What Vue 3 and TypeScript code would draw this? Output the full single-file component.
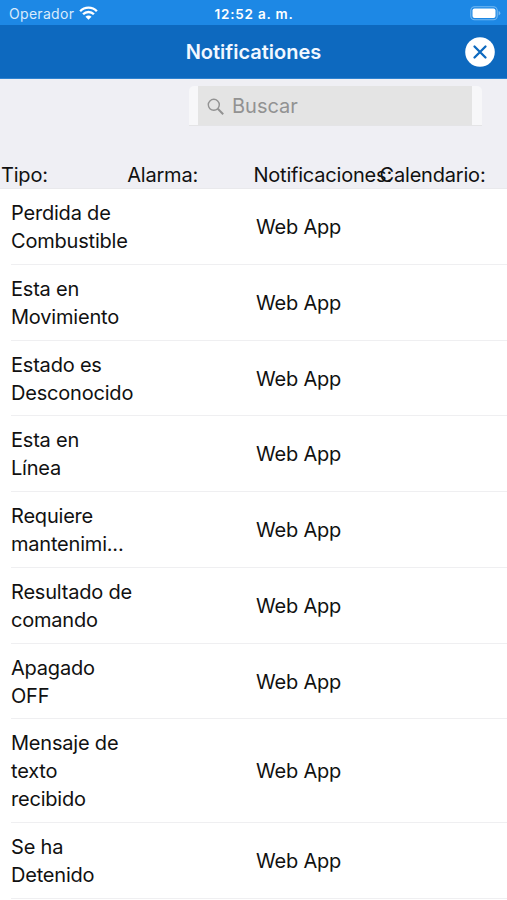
<script setup lang="ts">
interface NotificationRow {
  lines: string[]
  channel: string
}

const headers: string[] = ['Tipo:', 'Alarma:', 'Notificaciones:', 'Calendario:']

const rows: NotificationRow[] = [
  { lines: ['Perdida de', 'Combustible'], channel: 'Web App' },
  { lines: ['Esta en', 'Movimiento'], channel: 'Web App' },
  { lines: ['Estado es', 'Desconocido'], channel: 'Web App' },
  { lines: ['Esta en', 'Línea'], channel: 'Web App' },
  { lines: ['Requiere', 'mantenimi...'], channel: 'Web App' },
  { lines: ['Resultado de', 'comando'], channel: 'Web App' },
  { lines: ['Apagado', 'OFF'], channel: 'Web App' },
  { lines: ['Mensaje de', 'texto', 'recibido'], channel: 'Web App' },
  { lines: ['Se ha', 'Detenido'], channel: 'Web App' },
]
</script>

<template>
  <div class="screen">
    <div class="status">
      <div class="carrier">
        <span>Operador</span>
        <svg class="wifi" width="19" height="15" viewBox="0 0 20 15" fill="none" stroke="#fff" stroke-width="2.5">
          <path d="M1.2 5.1C6 .1 14 .1 18.8 5.1" />
          <path d="M4.3 8.3C7.4 5.1 12.6 5.1 15.7 8.3" />
          <path d="M6.8 10.9C8.6 9.1 11.4 9.1 13.2 10.9L10 14Z" fill="#fff" stroke="none" />
        </svg>
      </div>
      <span class="time">12:52 a. m.</span>
      <svg class="battery" width="31" height="15" viewBox="0 0 31 15">
        <rect x=".8" y=".8" width="26.4" height="13" rx="3.8" fill="none" stroke="#76b9f1" stroke-width="1.1" />
        <rect x="2.5" y="2.5" width="23" height="9.6" rx="2" fill="#fff" />
        <path d="M28.6 5.1Q30.3 5.7 30.3 7.3T28.6 9.5Z" fill="#76b9f1" />
      </svg>
    </div>
    <header class="navbar">
      <h1>Notificationes</h1>
      <button class="close" aria-label="Cerrar">
        <svg width="30" height="30" viewBox="0 0 30 30">
          <circle cx="15" cy="15" r="14.8" fill="#fff" />
          <path d="M9.5 9.5L20.5 20.5M20.5 9.5L9.5 20.5" stroke="#0d69bf" stroke-width="2.3" stroke-linecap="round" />
        </svg>
      </button>
    </header>
    <div class="searchbar">
      <div class="search">
        <div class="field">
          <svg width="18" height="18" viewBox="0 0 18 18" fill="none" stroke="#929292">
            <circle cx="6.8" cy="6.8" r="5.5" stroke-width="1.4" />
            <path d="M10.8 10.8L16.2 16.2" stroke-width="2" />
          </svg>
          <span>Buscar</span>
        </div>
      </div>
    </div>
    <div class="headings">
      <span v-for="heading in headers" :key="heading">{{ heading }}</span>
    </div>
    <ul class="list">
      <li v-for="(row, index) in rows" :key="index">
        <div class="type">
          <div v-for="line in row.lines" :key="line">{{ line }}</div>
        </div>
        <div class="channel">{{ row.channel }}</div>
      </li>
    </ul>
  </div>
</template>

<style>
body {
  margin: 0;
  background: #fff;
}
</style>

<style scoped>
.screen {
  width: 507px;
  height: 900px;
  overflow: hidden;
  background: #fff;
  color: #111;
  font-family: Inter, "Liberation Sans", sans-serif;
  font-size: 20px;
  letter-spacing: -0.2px;
}
.status {
  display: grid;
  grid-template-columns: 1fr auto 1fr;
  align-items: center;
  height: 25px;
  box-sizing: border-box;
  padding: 2px 6px 0 9px;
  background: #1d88e5;
  color: #fff;
  font-size: 14px;
}
.carrier {
  display: flex;
  align-items: center;
  gap: 5px;
  color: #d9ebfc;
  letter-spacing: 0.3px;
}
.time {
  position: relative;
  left: -1px;
  font-size: 13.5px;
  font-weight: 600;
  letter-spacing: 0.8px;
}
.battery {
  justify-self: end;
}
.navbar {
  display: grid;
  grid-template-columns: 1fr auto 1fr;
  align-items: center;
  height: 54px;
  box-sizing: border-box;
  padding-right: 12px;
  padding-left: 12px;
  background: #0d69bf;
  border-bottom: 1px solid #2f83d0;
}
h1 {
  grid-column: 2;
  margin: 0;
  padding-top: 1px;
  color: #f2f8ff;
  font-size: 20px;
  font-weight: 600;
  line-height: 28px;
  letter-spacing: 0;
}
.close {
  justify-self: end;
  display: flex;
  padding: 0;
  border: 0;
  background: none;
}
.searchbar {
  height: 81px;
  box-sizing: border-box;
  padding: 7px 25px 0 189px;
  background: #efeff4;
}
.search {
  height: 39px;
  padding: 0 10px 0 9px;
  background: #f7f7f9;
  border-radius: 5px 5px 0 0;
  border-bottom: 1px solid #e4e4e6;
}
.field {
  display: flex;
  align-items: center;
  gap: 7px;
  height: 39px;
  padding-left: 9px;
  background: #e4e4e4;
  color: #929292;
  letter-spacing: 0;
}
.field svg {
  margin-top: 3px;
}
.headings {
  display: grid;
  grid-template-columns: repeat(4, 126.2px);
  height: 29px;
  box-sizing: border-box;
  padding-left: 1px;
  background: #efeff4;
  border-bottom: 1px solid #e9e9ec;
  line-height: 30px;
  white-space: nowrap;
}
.list {
  margin: 0;
  padding: 0 0 0 11px;
  list-style: none;
}
.list li {
  display: grid;
  grid-template-columns: 245px 1fr;
  align-items: center;
  border-bottom: 1px solid #efeff1;
  padding: 10px 0 8.75px;
  line-height: 28px;
  white-space: nowrap;
}
</style>
